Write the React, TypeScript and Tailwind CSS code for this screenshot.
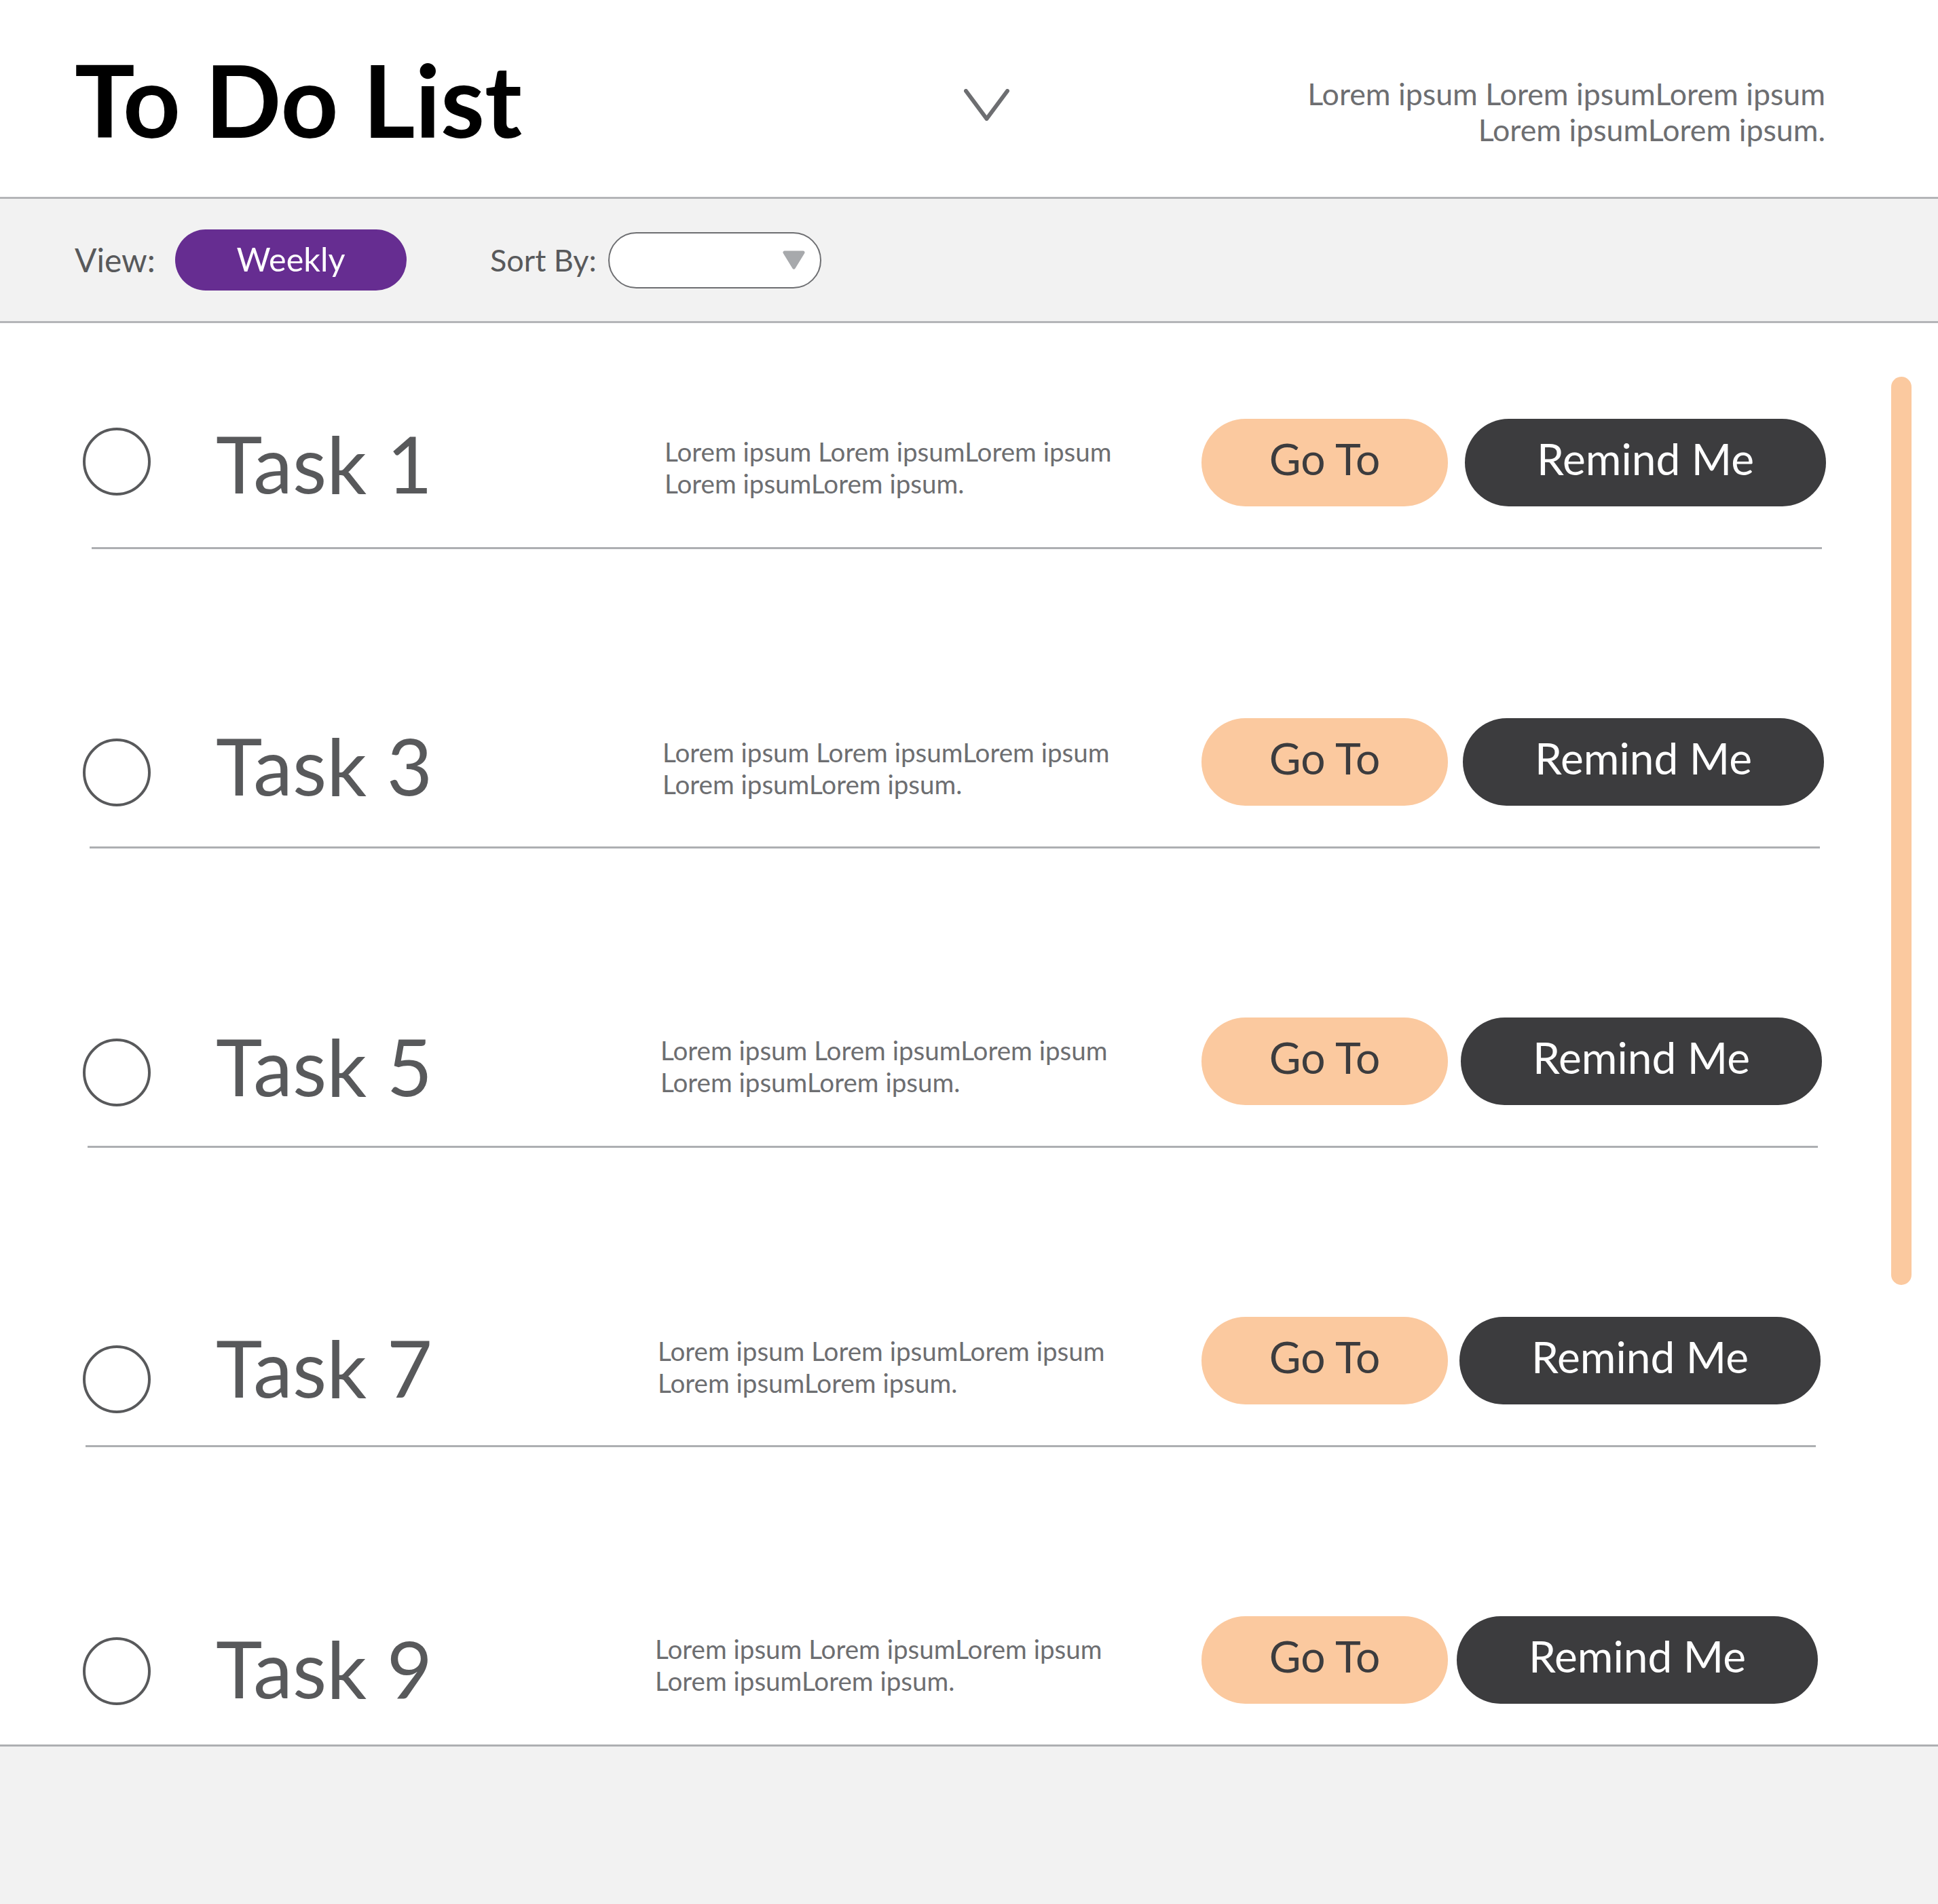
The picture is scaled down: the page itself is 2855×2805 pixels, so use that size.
import React from "react";

const tasks = [
  { name: "Task 1", circle: "mt-[13px]", title: "mt-[8px] w-[661px]", desc: "mt-[25px]", gap: "ml-[25px]", line: "ml-[135px]" },
  { name: "Task 3", circle: "mt-[30px]", title: "mt-[12px] w-[658px]", desc: "mt-[27px]", gap: "ml-[22px]", line: "ml-[132px]" },
  { name: "Task 5", circle: "mt-[31px]", title: "mt-[14px] w-[655px]", desc: "mt-[25px]", gap: "ml-[19px]", line: "ml-[129px]" },
  { name: "Task 7", circle: "mt-[42px]", title: "mt-[17px] w-[651px]", desc: "mt-[27px]", gap: "ml-[17px]", line: "ml-[126px]" },
  { name: "Task 9", circle: "mt-[31px]", title: "mt-[19px] w-[647px]", desc: "mt-[25px]", gap: "ml-[13px]", line: "" },
];

function TaskRow({ task, first, last }: { task: (typeof tasks)[number]; first: boolean; last: boolean }) {
  return (
    <div className={first ? "pt-[141px]" : "pt-[249px]"}>
      <div className="flex h-[129px] items-start">
        <div className="flex w-[1770px] shrink-0 items-start pl-[122px]">
          <div className={`h-[100px] w-[100px] shrink-0 rounded-full border-4 border-[#58595b] ${task.circle}`} />
          <div className={`ml-[96px] shrink-0 text-[116px] leading-none text-[#58595b] ${task.title}`}>
            {task.name}
          </div>
          <p className={`whitespace-nowrap text-[38.6px] leading-[47px] text-[#6d6e71] ${task.desc}`}>
            Lorem ipsum Lorem ipsumLorem ipsum
            <br />
            Lorem ipsumLorem ipsum.
          </p>
        </div>
        <button className="flex h-[129px] w-[363px] shrink-0 items-center justify-center rounded-full bg-[#fbc99f] pb-[12px] text-[64px] leading-none text-[#3c3c3e]">
          Go To
        </button>
        <button
          className={`flex h-[129px] w-[532px] shrink-0 items-center justify-center rounded-full bg-[#3c3c3e] pb-[12px] text-[64px] leading-none text-white ${task.gap}`}
        >
          Remind Me
        </button>
      </div>
      {last ? (
        <div className="h-[60px]" />
      ) : (
        <div className={`mt-[60px] h-[3px] w-[2549px] bg-[#adafb2] ${task.line}`} />
      )}
    </div>
  );
}

export default function App() {
  return (
    <div className="relative flex min-h-[2805px] w-[2855px] flex-col bg-white font-['Lato','Liberation_Sans',sans-serif]">
      {/* header */}
      <header className="flex h-[293px] items-start border-b-[3px] border-[#b4b5b8]">
        <div className="w-[1420px] shrink-0 pl-[110px] pt-[72px]">
          <h1 className="text-[148px] font-bold leading-none text-black">To Do List</h1>
        </div>
        <svg className="mt-[131px] shrink-0" width="67" height="47" viewBox="0 0 67 47" fill="none">
          <polyline points="3,3 33.5,44 64,3" stroke="#6d6e71" strokeWidth="6" strokeLinecap="round" strokeLinejoin="round" />
        </svg>
        <p className="flex-1 pr-[166px] pt-[112px] text-right text-[44.7px] leading-[53px] text-[#6d6e71]">
          Lorem ipsum Lorem ipsumLorem ipsum
          <br />
          Lorem ipsumLorem ipsum.
        </p>
      </header>

      {/* toolbar */}
      <div className="flex h-[183px] items-center border-b-[3px] border-[#b4b5b8] bg-[#f2f2f2] pl-[110px]">
        <span className="w-[148px] shrink-0 text-[48px] leading-none text-[#58595b]">View:</span>
        <button className="flex h-[90px] w-[341px] shrink-0 items-center justify-center rounded-full bg-[#662d91] pb-[4px] text-[48.5px] leading-none text-white">
          Weekly
        </button>
        <span className="ml-[123px] w-[174px] shrink-0 text-[45px] leading-none text-[#58595b]">Sort By:</span>
        <div className="flex h-[83px] w-[314px] shrink-0 items-center justify-end rounded-full border-2 border-[#6d6e71] bg-white pr-[22px]">
          <svg width="33" height="28" viewBox="0 0 33 28">
            <polygon points="3,3 30,3 16.5,25" fill="#a7a9ac" stroke="#a7a9ac" strokeWidth="5" strokeLinejoin="round" />
          </svg>
        </div>
      </div>

      {/* task list */}
      <main>
        {tasks.map((t, i) => (
          <TaskRow key={t.name} task={t} first={i === 0} last={i === tasks.length - 1} />
        ))}
      </main>

      <footer className="flex-1 border-t-[3px] border-[#adafb2] bg-[#f2f2f2]" />

      {/* scrollbar */}
      <div className="absolute left-[2786px] top-[555px] h-[1338px] w-[30px] rounded-full bg-[#fbc99f]" />
    </div>
  );
}
